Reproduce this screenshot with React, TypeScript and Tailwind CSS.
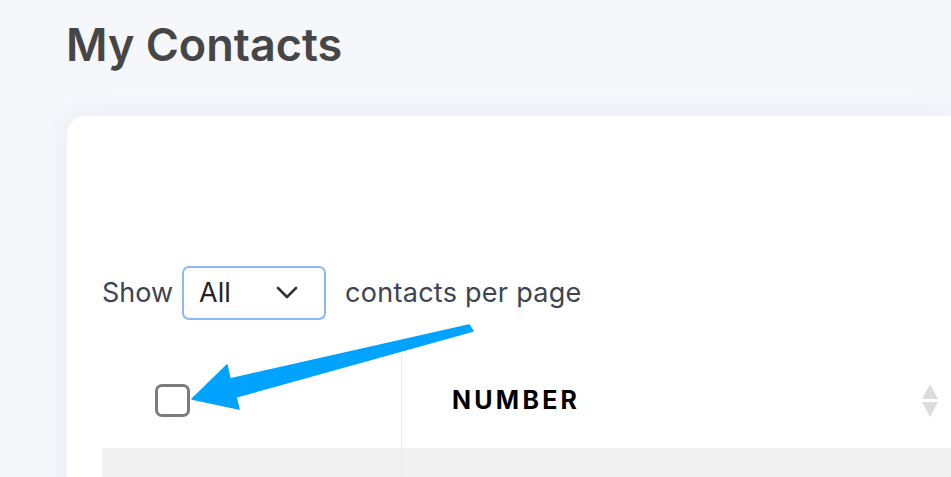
import React from 'react';

const SortIcon: React.FC = () => (
  <svg width="18" height="34" viewBox="0 0 18 34" className="text-[#dcdcdc]">
    <path d="M9 0 L17 15 L1 15 Z" fill="currentColor" />
    <path d="M1 18 L17 18 L9 33 Z" fill="currentColor" />
  </svg>
);

const App: React.FC = () => {
  return (
    <div className="relative min-h-screen h-[477px] overflow-hidden bg-[#f6f7fb] pl-[67px] font-['Inter',sans-serif]">
      {/* Title */}
      <h1 className="-ml-px pt-[16px] text-[45px] font-semibold leading-[58px] text-[#464646]">My Contacts</h1>

      {/* Card */}
      <div className="mt-[42px] h-[400px] rounded-tl-[18px] bg-white pl-[35px] pt-[150px] shadow-[0_0_28px_rgba(40,50,110,0.07)]">
        <div className="flex items-center text-[27px] text-[#3e4451]">
          <span>Show</span>
          <div className="ml-[9px] flex h-[54px] w-[144px] items-center justify-between rounded-[7px] border-2 border-[#8db8f7] pl-[15px] pr-[26px] text-[#1f2328]">
            <span>All</span>
            <svg width="22" height="14" viewBox="0 0 22 14" fill="none" stroke="#333" strokeWidth="2.6" strokeLinecap="round" strokeLinejoin="round">
              <path d="M2 2 L11 11 L20 2" />
            </svg>
          </div>
          <span className="ml-[19px] tracking-[0.01em]">contacts per page</span>
        </div>

        {/* Table */}
        <div className="mt-[33px]">
          <div className="flex h-[95px]">
            <div className="flex w-[300px] items-center border-r border-[#e9e9f0] pl-[53px]">
              <div className="h-[33px] w-[35px] rounded-[7px] border-[3px] border-[#7b7b7b]" />
            </div>
            <div className="flex flex-1 items-center justify-between pl-[50px] pr-[12px]">
              <span className="text-[25px] font-bold tracking-[0.13em] text-black">NUMBER</span>
              <SortIcon />
            </div>
          </div>
          <div className="flex h-[40px] bg-[#f1f1f1]">
            <div className="w-[300px] border-r border-[#e9e9f0]" />
            <div className="flex-1" />
          </div>
        </div>
      </div>

      {/* Annotation arrow */}
      <svg className="pointer-events-none absolute left-0 top-0" width="951" height="477" viewBox="0 0 951 477">
        <path
          d="M469 325 L473 331 L236 397 L239 409 L192 399 L227 365 L230 379 Z"
          fill="#00a3ff"
          stroke="#00a3ff"
          strokeWidth="1.5"
          strokeLinejoin="round"
        />
      </svg>
    </div>
  );
};

export default App;
